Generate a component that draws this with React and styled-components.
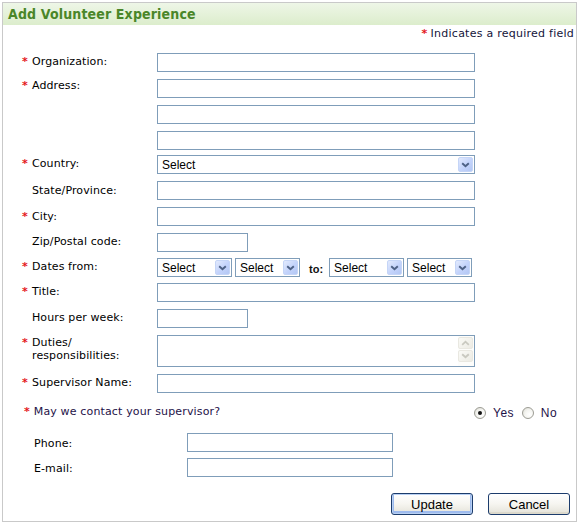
import React from "react";
import styled, { createGlobalStyle } from "styled-components";

const LABEL_FONT = `"DejaVu Sans", Verdana, Tahoma, sans-serif`;
const TITLE_FONT = `"DejaVu Sans Condensed", "DejaVu Sans", Tahoma, sans-serif`;
const CONTROL_FONT = `"Liberation Sans", Arial, sans-serif`;

const Global = createGlobalStyle`
  html, body { margin: 0; padding: 0; background: #fff; }
  body { font-family: ${LABEL_FONT}; color: #000; }
`;

const Panel = styled.div`
  box-sizing: border-box;
  margin: 2px 0 0 2px;
  width: 575px;
  height: 520px;
  border: 1px solid #c9c9c9;
  display: flex;
  flex-direction: column;
`;

const Header = styled.div`
  height: 22px;
  background: linear-gradient(to bottom, #eef6e7 0%, #dcedcc 100%);
  padding-left: 5px;
  display: flex;
  align-items: center;
`;

const Title = styled.h1`
  margin: 0;
  font: bold 14px ${TITLE_FONT};
  letter-spacing: 0.15px;
  color: #4a8629;
`;

const RequiredNote = styled.div`
  margin-top: 2px;
  align-self: flex-end;
  padding-right: 2px;
  font: 11px/13px ${LABEL_FONT};
  letter-spacing: 0.25px;
  color: #14143a;
`;

const Star = styled.span`
  color: #e4171b;
  font: bold 11px/13px "DejaVu Sans", sans-serif;
  margin-right: ${(p) => p.$mr ?? 3}px;
`;

const Form = styled.div`
  margin-top: 13px;
  padding-left: 19px;
  display: flex;
  flex-direction: column;
`;

const Row = styled.div`
  display: grid;
  grid-template-columns: 135px 1fr;
  margin-top: ${(p) => p.$gap ?? 7}px;
`;

const Label = styled.div`
  display: flex;
  align-items: flex-start;
  padding-top: ${(p) => p.$pt ?? 2}px;
  font: 11px/13px ${LABEL_FONT};
  letter-spacing: 0.1px;
  color: #000;
`;

const StarSlot = styled.span`
  flex: 0 0 10px;
  color: #e4171b;
  font: bold 11px/13px "DejaVu Sans", sans-serif;
`;

const Field = styled.div`
  display: flex;
  flex-direction: ${(p) => (p.$column ? "column" : "row")};
  align-items: ${(p) => (p.$column ? "flex-start" : "center")};
  gap: ${(p) => p.$gap ?? 0}px;
`;

const TextInput = styled.input`
  box-sizing: border-box;
  display: block;
  margin: 0;
  width: ${(p) => p.$w}px;
  height: 19px;
  border: 1px solid #7f9db9;
  padding: 0 3px;
  font: 12px ${CONTROL_FONT};
  background: #fff;
  outline: none;
`;

const SelectBox = styled.div`
  box-sizing: border-box;
  display: flex;
  align-items: center;
  width: ${(p) => p.$w}px;
  height: 19px;
  border: 1px solid #7f9db9;
  padding-left: 4px;
  margin-left: ${(p) => p.$ml ?? 0}px;
  background: #fff;
  font: 12px/15px ${CONTROL_FONT};
  color: #000;
`;

const SelectText = styled.span`
  flex: 1;
  padding-top: 1px;
`;

const DropBtn = styled.span`
  box-sizing: border-box;
  width: 15px;
  height: 15px;
  margin: 1px;
  border: 1px solid #c5d5f7;
  border-radius: 2px;
  background: linear-gradient(135deg, #e2eafd 0%, #c3d3fb 55%, #b3c7f4 100%);
  display: flex;
  align-items: center;
  justify-content: center;
`;

const ToText = styled.span`
  margin: 0 6px 0 9px;
  font: bold 11px ${CONTROL_FONT};
  color: #111;
  padding-top: 3px;
`;

const TextAreaBox = styled.div`
  box-sizing: border-box;
  width: 318px;
  height: 32px;
  border: 1px solid #7f9db9;
  display: flex;
  background: #fff;
`;

const TextAreaInner = styled.div`
  flex: 1;
`;

const ScrollCol = styled.div`
  width: 16px;
  display: flex;
  flex-direction: column;
  padding-top: 1px;
  gap: 1px;
  background: #fdfdfb;
`;

const ScrollBtn = styled.span`
  box-sizing: border-box;
  width: 15px;
  height: 12px;
  border: 1px solid #e9e8e1;
  border-radius: 2px;
  background: linear-gradient(135deg, #fafaf6, #ecebe4);
  display: flex;
  align-items: center;
  justify-content: center;
`;

const ContactRow = styled.div`
  margin-top: 12px;
  height: 14px;
  padding-left: 21px;
  padding-right: 19px;
  display: flex;
  align-items: flex-start;
`;

const ContactText = styled.span`
  font: 11px/13px ${LABEL_FONT};
  letter-spacing: 0.15px;
  color: #1e1248;
  flex: 1;
`;

const RadioGroup = styled.div`
  display: flex;
  align-items: center;
  height: 14px;
  margin-top: 1px;
`;

const RadioCircle = styled.span`
  box-sizing: border-box;
  width: 12px;
  height: 12px;
  border-radius: 50%;
  border: 1px solid #9c9c94;
  background: radial-gradient(circle at 65% 65%, #ffffff 0%, #f4f4f0 50%, #d8d8d0 100%);
  display: flex;
  align-items: center;
  justify-content: center;
  margin-left: ${(p) => p.$ml ?? 0}px;
  &::after {
    content: "";
    display: ${(p) => (p.$checked ? "block" : "none")};
    width: 4px;
    height: 4px;
    border-radius: 50%;
    background: #111;
  }
`;

const RadioText = styled.span`
  margin-left: 7px;
  font: 12px/14px ${CONTROL_FONT};
  letter-spacing: 0.4px;
  color: #1e1248;
`;

const SubForm = styled.div`
  margin-top: 14px;
  padding-left: 31px;
  display: flex;
  flex-direction: column;
`;

const SubRow = styled.div`
  display: grid;
  grid-template-columns: 153px 1fr;
  align-items: center;
  margin-top: ${(p) => p.$gap ?? 0}px;
`;

const SubLabel = styled.div`
  font: 11px/13px ${LABEL_FONT};
  letter-spacing: 0.1px;
  padding-top: 2px;
`;

const Actions = styled.div`
  margin-top: 16px;
  padding-right: 6px;
  display: flex;
  justify-content: flex-end;
  gap: 15px;
`;

const Button = styled.button`
  box-sizing: border-box;
  width: 82px;
  height: 22px;
  margin: 0;
  padding: 0;
  border: 1px solid #1c3c6c;
  border-radius: 3px;
  font: 13px ${CONTROL_FONT};
  color: #000;
  background: linear-gradient(to bottom, #ffffff 0%, #f6f5f0 50%, #e4e2d8 100%);
  box-shadow: ${(p) =>
    p.$default
      ? "inset 0 0 0 1px #b8d0f3, inset 0 -1px 0 2px #9ebbee"
      : "inset 0 -2px 0 0 #dcd9cc"};
`;

const Chevron = ({ color = "#4d6185" }) => (
  <svg width="9" height="6" viewBox="0 0 9 6">
    <path d="M1.2 1.2 L4.5 4.3 L7.8 1.2" fill="none" stroke={color} strokeWidth="1.9" />
  </svg>
);

const UpChevron = ({ color = "#c9c9c0" }) => (
  <svg width="9" height="6" viewBox="0 0 9 6">
    <path d="M1.2 4.8 L4.5 1.7 L7.8 4.8" fill="none" stroke={color} strokeWidth="1.8" />
  </svg>
);

const Select = ({ w, ml }) => (
  <SelectBox $w={w} $ml={ml}>
    <SelectText>Select</SelectText>
    <DropBtn>
      <Chevron />
    </DropBtn>
  </SelectBox>
);

const FieldLabel = ({ required, children, pt }) => (
  <Label $pt={pt}>
    <StarSlot>{required ? "*" : ""}</StarSlot>
    <span>{children}</span>
  </Label>
);

export default function App() {
  return (
    <>
      <Global />
      <Panel>
        <Header>
          <Title>Add Volunteer Experience</Title>
        </Header>
        <RequiredNote>
          <Star>*</Star>Indicates a required field
        </RequiredNote>
        <Form>
          <Row $gap={0}>
            <FieldLabel required>Organization:</FieldLabel>
            <Field><TextInput $w={318} /></Field>
          </Row>
          <Row>
            <FieldLabel required pt={0}>Address:</FieldLabel>
            <Field $column $gap={7}>
              <TextInput $w={318} />
              <TextInput $w={318} />
              <TextInput $w={318} />
            </Field>
          </Row>
          <Row $gap={5}>
            <FieldLabel required>Country:</FieldLabel>
            <Field><Select w={318} /></Field>
          </Row>
          <Row>
            <FieldLabel pt={3}>State/Province:</FieldLabel>
            <Field><TextInput $w={318} /></Field>
          </Row>
          <Row>
            <FieldLabel required pt={3}>City:</FieldLabel>
            <Field><TextInput $w={318} /></Field>
          </Row>
          <Row>
            <FieldLabel pt={2}>Zip/Postal code:</FieldLabel>
            <Field><TextInput $w={91} /></Field>
          </Row>
          <Row $gap={6}>
            <FieldLabel required>Dates from:</FieldLabel>
            <Field>
              <Select w={75} />
              <Select w={65} ml={3} />
              <ToText>to:</ToText>
              <Select w={75} />
              <Select w={65} ml={3} />
            </Field>
          </Row>
          <Row $gap={6}>
            <FieldLabel required>Title:</FieldLabel>
            <Field><TextInput $w={318} /></Field>
          </Row>
          <Row>
            <FieldLabel>Hours per week:</FieldLabel>
            <Field><TextInput $w={91} /></Field>
          </Row>
          <Row>
            <FieldLabel required pt={1}>
              Duties/
              <br />
              responsibilities:
            </FieldLabel>
            <Field>
              <TextAreaBox>
                <TextAreaInner />
                <ScrollCol>
                  <ScrollBtn><UpChevron /></ScrollBtn>
                  <ScrollBtn><Chevron color="#c9c9c0" /></ScrollBtn>
                </ScrollCol>
              </TextAreaBox>
            </Field>
          </Row>
          <Row>
            <FieldLabel required>Supervisor Name:</FieldLabel>
            <Field><TextInput $w={318} /></Field>
          </Row>
        </Form>
        <ContactRow>
          <Star $mr={4}>*</Star>
          <ContactText>May we contact your supervisor?</ContactText>
          <RadioGroup>
            <RadioCircle $checked />
            <RadioText>Yes</RadioText>
            <RadioCircle $ml={8} />
            <RadioText>No</RadioText>
          </RadioGroup>
        </ContactRow>
        <SubForm>
          <SubRow>
            <SubLabel>Phone:</SubLabel>
            <TextInput $w={206} />
          </SubRow>
          <SubRow $gap={6}>
            <SubLabel>E-mail:</SubLabel>
            <TextInput $w={206} />
          </SubRow>
        </SubForm>
        <Actions>
          <Button $default>Update</Button>
          <Button>Cancel</Button>
        </Actions>
      </Panel>
    </>
  );
}
